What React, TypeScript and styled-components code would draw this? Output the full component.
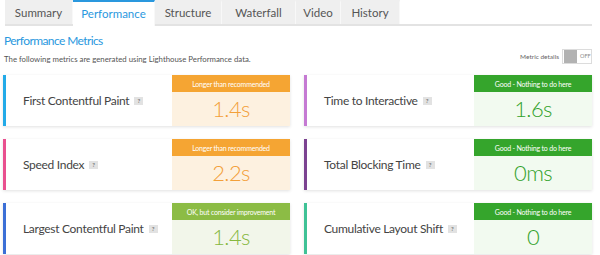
import React from "react";
import styled, { createGlobalStyle } from "styled-components";

const Global = createGlobalStyle`
  html, body { margin: 0; padding: 0; background: #ffffff; }
  body { font-family: Lato, "Open Sans", sans-serif; color: #555; }
`;

const Page = styled.div`
  width: 600px;
  height: 255px;
  overflow: hidden;
`;

const TabBar = styled.div`
  display: flex;
  margin-left: 5px;
  width: 587px;
  height: 24px;
  border-bottom: 2px solid #e3e3e3;
`;

const Tab = styled.div<{ $active?: boolean; $w: number }>`
  width: ${(p) => p.$w}px;
  box-sizing: border-box;
  display: flex;
  align-items: center;
  justify-content: center;
  font-size: 11.5px;
  color: ${(p) => (p.$active ? "#2a98de" : "#555")};
  background: ${(p) => (p.$active ? "#ffffff" : "#efefef")};
  border-top: 2px solid ${(p) => (p.$active ? "#2a98de" : "#efefef")};
  border-right: 1px solid #f8f8f8;
  height: ${(p) => (p.$active ? "26px" : "24px")};
  padding-bottom: 1px;
`;

const Content = styled.div`
  padding: 0 8px 0 3px;
`;

const Heading = styled.h2`
  margin: 7px 0 0 1px;
  font-size: 12px;
  line-height: 16px;
  font-weight: 400;
  color: #2a98de;
  letter-spacing: -0.6px;
`;

const InfoRow = styled.div`
  display: flex;
  justify-content: space-between;
  margin-top: -1px;
  height: 16px;
`;

const Subtitle = styled.p`
  margin: 0 0 0 1px;
  align-self: flex-end;
  font-size: 7.8px;
  line-height: 10px;
  color: #555;
`;

const ToggleWrap = styled.div`
  display: flex;
  align-items: center;
  gap: 3px;
  font-size: 6.5px;
  color: #666;
`;

const Toggle = styled.div`
  width: 30px;
  height: 15px;
  box-sizing: border-box;
  border: 1px solid #dcdcdc;
  display: flex;
  align-items: center;
  padding: 0 1px;
  gap: 3px;
`;

const Knob = styled.span`
  display: block;
  flex: none;
  width: 13px;
  height: 13px;
  background: #b2b2b2;
`;

const OffText = styled.span`
  font-size: 5.5px;
  color: #888;
`;

const Grid = styled.div`
  margin-top: 11px;
  display: grid;
  grid-template-columns: 287px 288px;
  column-gap: 14px;
  row-gap: 13px;
`;

const Card = styled.div<{ $accent: string }>`
  height: 51px;
  display: flex;
  background: #fff;
  border-left: 3px solid ${(p) => p.$accent};
  box-shadow: 0 1px 3px rgba(0, 0, 0, 0.12);
`;

const Label = styled.div`
  flex: 1;
  display: flex;
  align-items: center;
  padding-left: 17px;
  font-size: 12px;
  color: #444;
  letter-spacing: -0.3px;
  gap: 5px;
`;

const Help = styled.span`
  width: 9px;
  height: 8px;
  background: #e2e2e2;
  color: #777;
  font-size: 6px;
  font-weight: 700;
  display: inline-flex;
  align-items: center;
  justify-content: center;
  letter-spacing: 0;
`;

const ValueBox = styled.div<{ $bg: string }>`
  width: 118px;
  display: flex;
  flex-direction: column;
  background: ${(p) => p.$bg};
`;

const Band = styled.div<{ $color: string }>`
  height: 17px;
  background: ${(p) => p.$color};
  color: #fff;
  font-size: 7px;
  display: flex;
  align-items: center;
  justify-content: center;
  letter-spacing: -0.2px;
`;

const Value = styled.div<{ $color: string }>`
  flex: 1;
  display: flex;
  align-items: center;
  justify-content: center;
  font-size: 22px;
  font-weight: 300;
  letter-spacing: -0.6px;
  padding-bottom: 1px;
  color: ${(p) => p.$color};
`;

type Grade = "warn" | "good" | "ok";
const grades: Record<Grade, { band: string; bg: string; text: string; msg: string }> = {
  warn: { band: "#f5a533", bg: "#fdf1e0", text: "#f3a03a", msg: "Longer than recommended" },
  good: { band: "#35a52c", bg: "#f2faf0", text: "#33a22c", msg: "Good - Nothing to do here" },
  ok: { band: "#8cbc45", bg: "#f2f6ea", text: "#86b83f", msg: "OK, but consider improvement" },
};

const metrics: { label: string; accent: string; grade: Grade; value: string }[] = [
  { label: "First Contentful Paint", accent: "#22aae8", grade: "warn", value: "1.4s" },
  { label: "Time to Interactive", accent: "#c57ad3", grade: "good", value: "1.6s" },
  { label: "Speed Index", accent: "#e9508f", grade: "warn", value: "2.2s" },
  { label: "Total Blocking Time", accent: "#7b4290", grade: "good", value: "0ms" },
  { label: "Largest Contentful Paint", accent: "#3b6fd6", grade: "ok", value: "1.4s" },
  { label: "Cumulative Layout Shift", accent: "#3fc296", grade: "good", value: "0" },
];

const tabs: { name: string; w: number }[] = [
  { name: "Summary", w: 68 },
  { name: "Performance", w: 82 },
  { name: "Structure", w: 67 },
  { name: "Waterfall", w: 74 },
  { name: "Video", w: 45 },
  { name: "History", w: 59 },
];

export default function App() {
  return (
    <Page>
      <Global />
      <TabBar>
        {tabs.map((t) => (
          <Tab key={t.name} $w={t.w} $active={t.name === "Performance"}>
            {t.name}
          </Tab>
        ))}
      </TabBar>
      <Content>
        <Heading>Performance Metrics</Heading>
        <InfoRow>
          <Subtitle>The following metrics are generated using Lighthouse Performance data.</Subtitle>
          <ToggleWrap>
            Metric details
            <Toggle>
              <Knob />
              <OffText>OFF</OffText>
            </Toggle>
          </ToggleWrap>
        </InfoRow>
        <Grid>
          {metrics.map((m) => {
            const g = grades[m.grade];
            return (
              <Card key={m.label} $accent={m.accent}>
                <Label>
                  {m.label}
                  <Help>?</Help>
                </Label>
                <ValueBox $bg={g.bg}>
                  <Band $color={g.band}>{g.msg}</Band>
                  <Value $color={g.text}>{m.value}</Value>
                </ValueBox>
              </Card>
            );
          })}
        </Grid>
      </Content>
    </Page>
  );
}
